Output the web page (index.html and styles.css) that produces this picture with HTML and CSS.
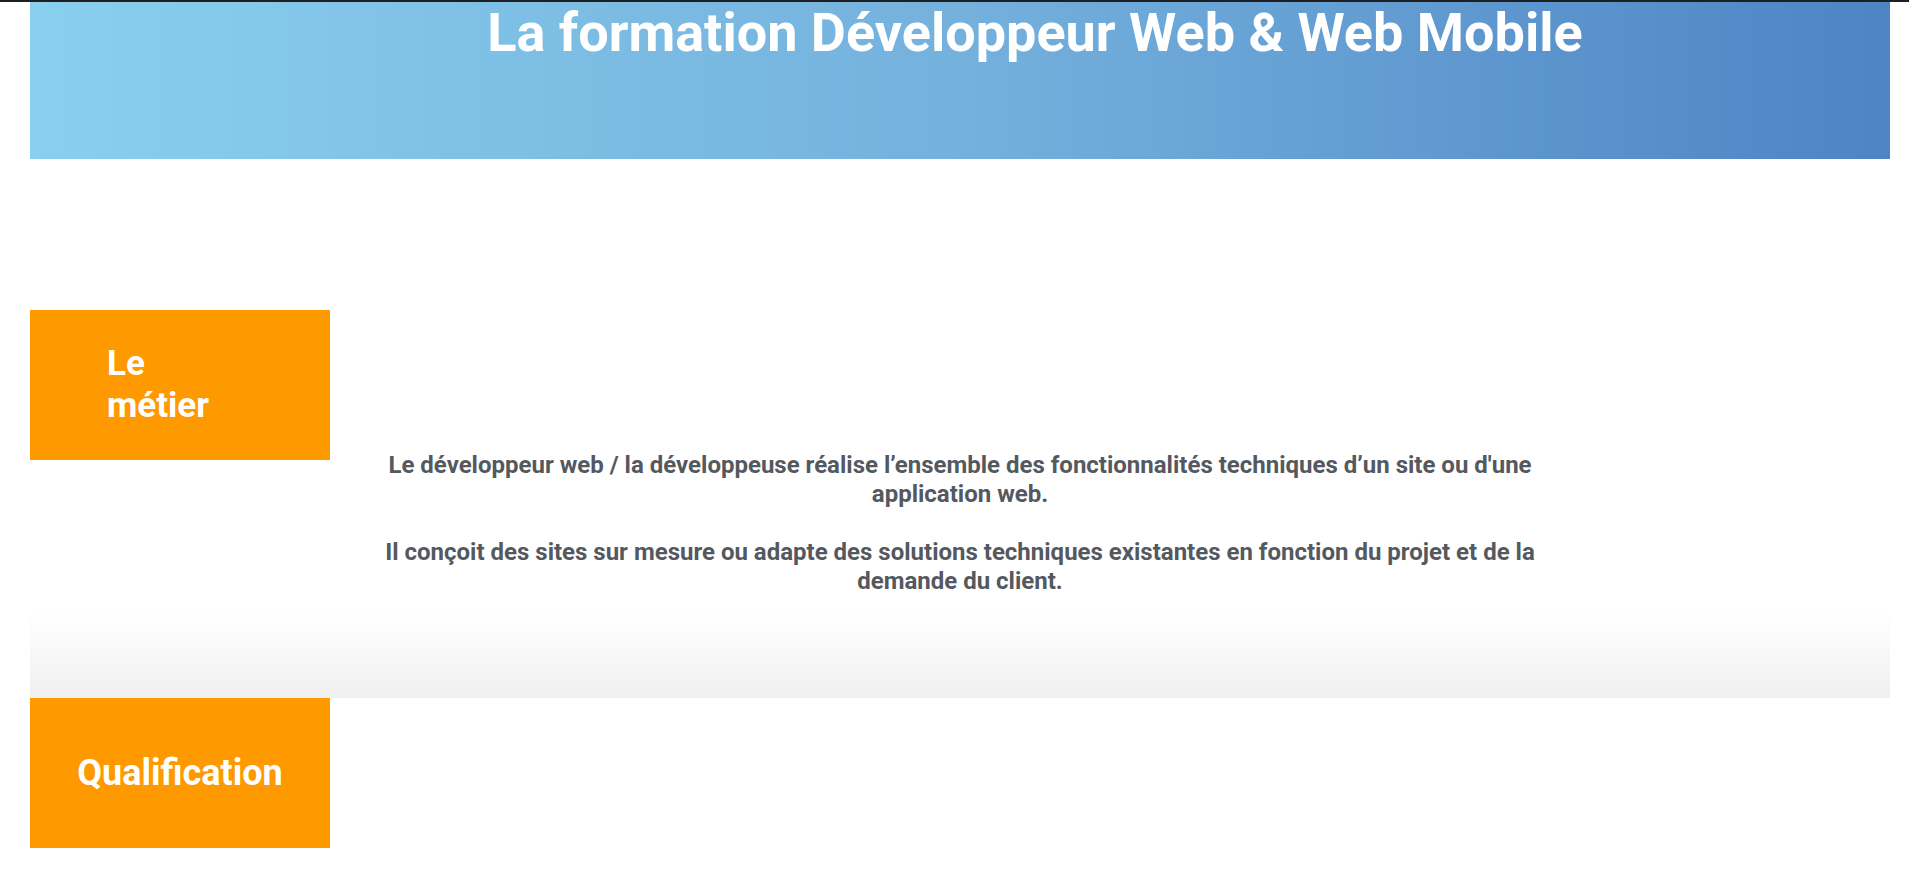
FILE: index.html
```html
<!DOCTYPE html>
<html lang="fr">
<head>
<meta charset="utf-8">
<title>La formation Développeur Web &amp; Web Mobile</title>
<link rel="stylesheet" href="styles.css">
</head>
<body>
<div class="topline"></div>
<main class="page">
  <header class="hero">
    <h1 class="hero-title">La formation Développeur Web &amp; Web Mobile</h1>
  </header>

  <section class="metier">
    <div class="tag tag-left">
      <h2 class="tag-title tag-title-narrow">Le métier</h2>
    </div>
    <p class="lead">
      Le développeur web / la développeuse réalise l’ensemble des fonctionnalités techniques d’un site ou d'une application web.<br><br>
      Il conçoit des sites sur mesure ou adapte des solutions techniques existantes en fonction du projet et de la demande du client.
    </p>
  </section>

  <div class="fade-band"></div>

  <section class="qualif">
    <div class="tag tag-center">
      <h2 class="tag-title tag-title-wide">Qualification</h2>
    </div>
  </section>
</main>
</body>
</html>
```

FILE: styles.css
```css
html, body {
  margin: 0;
  padding: 0;
  background: #ffffff;
}

body {
  font-family: Roboto, "Liberation Sans", sans-serif;
}

.topline {
  height: 2px;
  background: #1e1f22;
}

.page {
  margin-left: 30px;
  width: 1860px;
}

.hero {
  height: 157px;
  background: linear-gradient(to right, #89cfee 0%, #74b1dd 50%, #4d84c4 100%);
}

.hero-title {
  margin: 0;
  padding-left: 150px;
  text-align: center;
  color: #ffffff;
  font-family: Roboto, "Liberation Sans", sans-serif;
  font-weight: 700;
  font-size: 54px;
  line-height: 62px;
}

.metier {
  padding-top: 151px;
}

.tag {
  width: 300px;
  height: 150px;
  background: #ff9900;
  display: flex;
  align-items: center;
}

.tag-left {
  padding-left: 77px;
  box-sizing: border-box;
}

.tag-center {
  justify-content: center;
}

.tag-title {
  margin: 0;
  color: #ffffff;
  font-family: Roboto, "Liberation Sans", sans-serif;
  font-weight: 700;
  font-size: 35px;
  line-height: 42px;
}

.tag-title-narrow {
  width: 130px;
}

.tag-title-wide {
  font-size: 36px;
}

.lead {
  max-width: 1200px;
  margin: -9px auto 0;
  text-align: center;
  color: #54595f;
  font-family: Roboto, "Liberation Sans", sans-serif;
  font-weight: 700;
  font-size: 24px;
  line-height: 29px;
}

.fade-band {
  margin-top: 15px;
  height: 87px;
  background: linear-gradient(to bottom, #ffffff 0%, #efefef 100%);
}
```
